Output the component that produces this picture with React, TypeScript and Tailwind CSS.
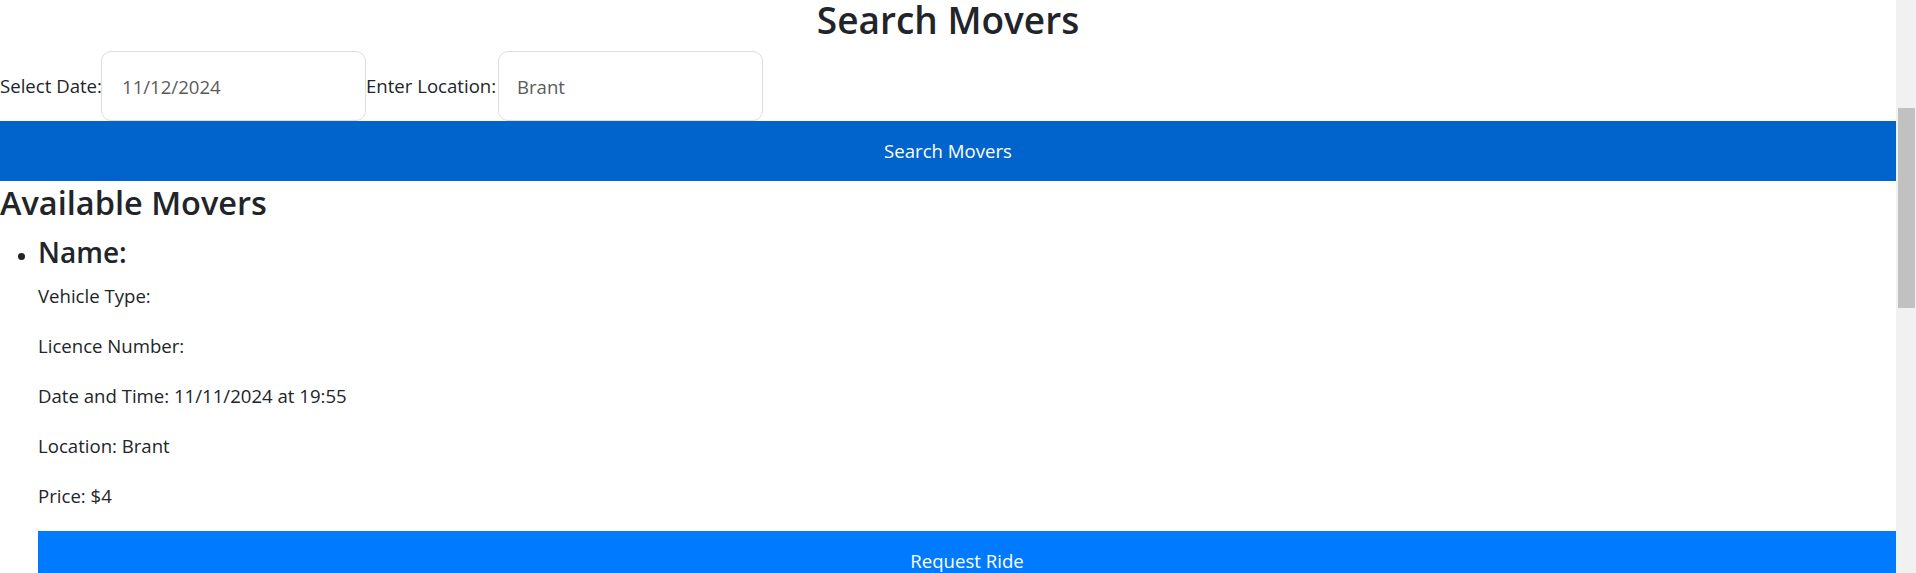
import React from "react";

export default function App() {
  return (
    <div className="flex h-[573px] w-[1916px] overflow-hidden bg-white font-['Open_Sans',sans-serif] text-[#212529]">
      <main className="min-w-0 flex-1">
        <h2 className="pt-[1px] text-center text-[37px] font-semibold leading-[38px]">Search Movers</h2>
        <div className="mt-[12px] flex h-[70px] items-center text-[18.6px] leading-[30px]">
          <label className="w-[101px] whitespace-nowrap">Select Date:</label>
          <input
            readOnly
            value="11/12/2024"
            className="h-[70px] w-[265px] rounded-[10px] border border-[#dedede] bg-white pl-[20px] text-[#5b5b5b] outline-none"
          />
          <label className="w-[132px] whitespace-nowrap">Enter Location:</label>
          <input
            readOnly
            value="Brant"
            className="h-[70px] w-[265px] rounded-[10px] border border-[#dedede] bg-white pl-[18px] text-[#5b5b5b] outline-none"
          />
        </div>
        <button className="block h-[60px] w-full bg-[#0064cc] text-[18.6px] leading-[30px] text-white">
          Search Movers
        </button>
        <h3 className="mt-[1px] text-[32.5px] font-semibold leading-[42px]">Available Movers</h3>
        <ul className="mt-[10px] list-disc pl-[38px] text-[19px]">
          <li>
            <h4 className="text-[28px] font-semibold leading-[36px]">Name:</h4>
            <div className="mt-[10.5px] text-[18.6px] leading-[30px]">
              <p className="mb-[20px]">Vehicle Type:</p>
              <p className="mb-[20px]">Licence Number:</p>
              <p className="mb-[20px]">Date and Time: 11/11/2024 at 19:55</p>
              <p className="mb-[20px]">Location: Brant</p>
              <p className="mb-[20px]">Price: $4</p>
            </div>
            <button className="block h-[60px] w-full bg-[#007bff] text-[18.6px] leading-[30px] text-white">
              Request Ride
            </button>
          </li>
        </ul>
      </main>
      <div className="w-[20px] shrink-0 bg-[#f1f1f1]">
        <div className="ml-[2px] mt-[108px] h-[200px] w-[17px] bg-[#c1c1c1]" />
      </div>
    </div>
  );
}
